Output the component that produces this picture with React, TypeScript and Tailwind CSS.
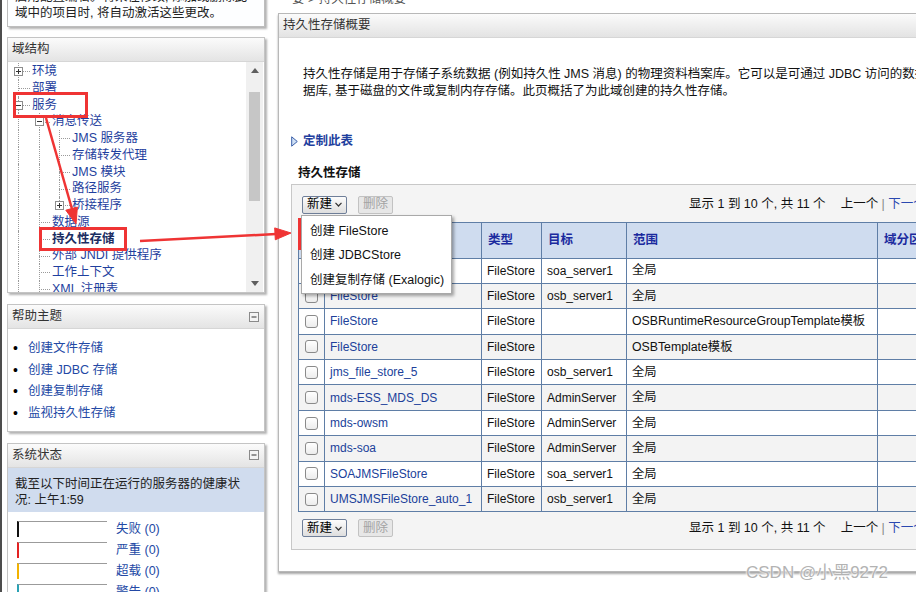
import React from "react";

type Node = { t: string; l: 0 | 1 | 2; exp?: "open" | "closed"; bold?: boolean; last?: boolean };

const TREE: Node[] = [
  { t: "环境", l: 0, exp: "closed" },
  { t: "部署", l: 0 },
  { t: "服务", l: 0, exp: "open" },
  { t: "消息传送", l: 1, exp: "open" },
  { t: "JMS 服务器", l: 2 },
  { t: "存储转发代理", l: 2 },
  { t: "JMS 模块", l: 2 },
  { t: "路径服务", l: 2 },
  { t: "桥接程序", l: 2, exp: "closed", last: true },
  { t: "数据源", l: 1 },
  { t: "持久性存储", l: 1, bold: true },
  { t: "外部 JNDI 提供程序", l: 1 },
  { t: "工作上下文", l: 1 },
  { t: "XML 注册表", l: 1 },
  { t: "XML 实体高速缓存", l: 1 },
];

const PL = ["pl-[24px]", "pl-[44px]", "pl-[64px]"];
const HLINE = ["left-[10px] w-[12px]", "left-[31px] w-[11px]", "left-[51px] w-[11px]"];
const EXP = ["left-[6px]", "left-[27px]", "left-[47px]"];

const ROWS = [
  ["FileStore", "FileStore", "soa_server1", "全局"],
  ["FileStore", "FileStore", "osb_server1", "全局"],
  ["FileStore", "FileStore", "", "OSBRuntimeResourceGroupTemplate模板"],
  ["FileStore", "FileStore", "", "OSBTemplate模板"],
  ["jms_file_store_5", "FileStore", "osb_server1", "全局"],
  ["mds-ESS_MDS_DS", "FileStore", "AdminServer", "全局"],
  ["mds-owsm", "FileStore", "AdminServer", "全局"],
  ["mds-soa", "FileStore", "AdminServer", "全局"],
  ["SOAJMSFileStore", "FileStore", "soa_server1", "全局"],
  ["UMSJMSFileStore_auto_1", "FileStore", "osb_server1", "全局"],
];

const STATUS = [
  { label: "失败", bar: "border-l-[#111]" },
  { label: "严重", bar: "border-l-[#e32222]" },
  { label: "超载", bar: "border-l-[#f2b200]" },
  { label: "警告", bar: "border-l-[#2aa2b4]" },
];

function Expander({ open }: { open: boolean }) {
  return (
    <svg width="9" height="9" viewBox="0 0 9 9" className="block">
      <rect x="0.5" y="0.5" width="8" height="8" fill="#fff" stroke="#8d8d8d" />
      <path d="M2 4.5h5" stroke="#333" />
      {!open && <path d="M4.5 2v5" stroke="#333" />}
    </svg>
  );
}

function Minus() {
  return (
    <svg width="10" height="10" viewBox="0 0 10 10" className="block">
      <rect x="0.5" y="0.5" width="9" height="9" fill="#f4f4f4" stroke="#8a8a8a" />
      <path d="M2.5 5h5" stroke="#333" />
    </svg>
  );
}

function TreeRow({ n }: { n: Node }) {
  return (
    <div className={`relative h-[16.75px] leading-[16.75px] whitespace-nowrap ${PL[n.l]}`}>
      <span className="absolute left-[10px] top-0 bottom-0 border-l border-dotted border-[#9a9a9a]" />
      {n.l >= 1 && <span className="absolute left-[31px] top-0 bottom-0 border-l border-dotted border-[#9a9a9a]" />}
      {n.l === 2 && (
        <span className={`absolute left-[51px] top-0 border-l border-dotted border-[#9a9a9a] ${n.last ? "h-1/2" : "bottom-0"}`} />
      )}
      <span className={`absolute top-1/2 border-t border-dotted border-[#9a9a9a] ${HLINE[n.l]}`} />
      {n.exp && (
        <span className={`absolute top-[4px] ${EXP[n.l]}`}>
          <Expander open={n.exp === "open"} />
        </span>
      )}
      <span className={n.bold ? "font-bold text-[#1b2d62]" : "text-[#1f3f9e]"}>{n.t}</span>
    </div>
  );
}

function PanelHead({ title, minus }: { title: string; minus?: boolean }) {
  return (
    <div className="h-[24px] flex items-center justify-between pl-[4px] pr-[5px] bg-linear-to-b from-[#fbfbfb] to-[#e4e4e4] border-b border-[#d6d6d6] text-[#333]">
      <span>{title}</span>
      {minus && <Minus />}
    </div>
  );
}

function Btn({ label, disabled, menu }: { label: string; disabled?: boolean; menu?: boolean }) {
  if (disabled)
    return (
      <div className="h-[18px] w-[35px] flex items-center justify-center rounded-[2px] border border-[#c2c2c2] bg-[#e7e7e7] text-[#a3a3a3]">
        {label}
      </div>
    );
  return (
    <div className="h-[18px] w-[45px] flex items-center justify-center gap-[3px] rounded-[2px] border border-[#6f7f99] bg-linear-to-b from-[#fcfcfc] to-[#dedede] text-black">
      <span>{label}</span>
      {menu && (
        <svg width="7" height="5" viewBox="0 0 7 5">
          <path d="M0.5 0.8L3.5 4L6.5 0.8" fill="none" stroke="#333" strokeWidth="1.2" />
        </svg>
      )}
    </div>
  );
}

function Pager() {
  return (
    <div className="whitespace-nowrap text-[#111]">
      显示 1 到 10 个, 共 11 个<span className="inline-block w-[15px]" />上一个 <span className="text-[#888]">|</span>{" "}
      <span className="text-[#2a48b0]">下一个</span>
    </div>
  );
}

export default function App() {
  return (
    <div className="relative w-[916px] h-[592px] overflow-hidden bg-white flex text-[12.5px] font-['Liberation_Sans','Noto_Sans_CJK_SC',sans-serif]">
      <div className="w-[2px] shrink-0 bg-[#4d4d4d]" />

      {/* left column */}
      <div className="w-[268px] shrink-0 flex flex-col">
        <div className="ml-[5px] w-[258px] -mt-[14px] border border-[#bdbdbd] bg-[#fdfeff] pt-[2px] pb-[5px] pl-[7px] leading-[16px] text-[#222] shadow-[2px_2px_2px_rgba(0,0,0,0.3)] whitespace-nowrap">
          启用配置编辑。将来在修改, 添加或删除此
          <br />
          域中的项目时, 将自动激活这些更改。
        </div>

        <div className="ml-[5px] mt-[10px] w-[258px] border border-[#c4c4c4] bg-white shadow-[2px_2px_2px_rgba(0,0,0,0.3)]">
          <PanelHead title="域结构" />
          <div className="h-[230px] flex pr-[1px]">
            <div className="flex-1 overflow-hidden pt-[1px]">
              {TREE.map((n) => (
                <TreeRow key={n.t} n={n} />
              ))}
            </div>
            <div className="w-[17px] bg-[#f0f0f0] flex flex-col items-center">
              <div className="h-[17px] flex items-center justify-center">
                <svg width="8" height="5" viewBox="0 0 8 5">
                  <path d="M0 5L4 0L8 5Z" fill="#5f5f5f" />
                </svg>
              </div>
              <div className="mt-[13px] w-[11px] h-[109px] bg-[#c6c6c6]" />
              <div className="mt-auto h-[17px] flex items-center justify-center">
                <svg width="8" height="5" viewBox="0 0 8 5">
                  <path d="M0 0L4 5L8 0Z" fill="#5f5f5f" />
                </svg>
              </div>
            </div>
          </div>
        </div>

        <div className="ml-[5px] mt-[11px] w-[258px] border border-[#c4c4c4] bg-white shadow-[2px_2px_2px_rgba(0,0,0,0.3)]">
          <PanelHead title="帮助主题" minus />
          <ul className="pt-[9px] pb-[6px] leading-[21.7px]">
            {["创建文件存储", "创建 JDBC 存储", "创建复制存储", "监视持久性存储"].map((t) => (
              <li key={t} className="flex items-center">
                <span className="w-[20px] pl-[5px] text-black text-[14px]">•</span>
                <span className="text-[#2349a5]">{t}</span>
              </li>
            ))}
          </ul>
        </div>

        <div className="ml-[5px] mt-[11px] w-[258px] border border-[#c4c4c4] bg-white shadow-[2px_2px_2px_rgba(0,0,0,0.3)]">
          <PanelHead title="系统状态" minus />
          <div className="bg-[#d0dcee] pl-[7px] pt-[8px] pb-[4px] leading-[16px] text-[#222] whitespace-nowrap">
            截至以下时间正在运行的服务器的健康状
            <br />
            况: 上午1:59
          </div>
          <div className="pl-[9px] pt-[9px] flex flex-col gap-[5px]">
            {STATUS.map((s) => (
              <div key={s.label} className="flex items-start gap-[9px]">
                <div className={`w-[90px] h-[16px] border-t border-t-[#9b9b9b] border-l-2 ${s.bar}`} />
                <span className="leading-[16px] text-[#2349a5]">
                  {s.label} (0)
                </span>
              </div>
            ))}
          </div>
        </div>
      </div>

      {/* right column */}
      <div className="flex-1 flex flex-col min-w-0">
        <div className="h-[13px] overflow-hidden pl-[22px]">
          <div className="-mt-[9px] leading-[16px] text-[#555] whitespace-nowrap">要 &gt; 持久性存储概要</div>
        </div>

        <div className="ml-[8px] w-[700px] shrink-0 border-t border-l border-b border-[#b8b8b8] bg-white shadow-[0_2px_2px_rgba(0,0,0,0.35)]">
          <div className="h-[24px] flex items-center pl-[4px] bg-linear-to-b from-[#fbfbfb] to-[#e3e3e3] border-b border-[#d6d6d6] text-[#333]">
            持久性存储概要
          </div>

          <p className="pt-[28px] pl-[24px] leading-[17px] text-[#111] whitespace-nowrap">
            持久性存储是用于存储子系统数据 (例如持久性 JMS 消息) 的物理资料档案库。它可以是可通过 JDBC 访问的数据
            <br />
            据库, 基于磁盘的文件或复制内存存储。此页概括了为此域创建的持久性存储。
          </p>

          <div className="mt-[33px] pl-[12px] h-[17px] flex items-center gap-[5px]">
            <svg width="7" height="11" viewBox="0 0 7 11">
              <path d="M0.7 0.8L6.3 5.5L0.7 10.2Z" fill="#cfe0f5" stroke="#3b5fa8" strokeWidth="1" />
            </svg>
            <span className="font-bold text-[#1f3f9e]">定制此表</span>
          </div>

          <div className="mt-[15px] pl-[19px] h-[17px] leading-[17px] font-bold text-[#111]">持久性存储</div>

          <div className="mt-[1.5px] ml-[12px] mb-[21px] w-[690px] border border-[#c8c8c8] bg-[#f4f4f4] pt-[11px] pb-[12px]">
            <div className="flex items-center pl-[10px] h-[18px]">
              <div className="w-[387px] flex items-center gap-[11px]">
                <div className="relative">
                  <Btn label="新建" menu />
                  <div className="absolute left-[-1px] top-[19px] w-[151px] h-[79px] z-10 border border-[#a9a9a9] bg-white shadow-[2px_2px_3px_rgba(0,0,0,0.35)] pt-[3px] text-[#111] whitespace-nowrap">
                    <div className="h-[24.5px] leading-[24.5px] pl-[8px]">创建 FileStore</div>
                    <div className="h-[24.5px] leading-[24.5px] pl-[8px]">创建 JDBCStore</div>
                    <div className="h-[24.5px] leading-[24.5px] pl-[8px]">创建复制存储 (Exalogic)</div>
                  </div>
                </div>
                <Btn label="删除" disabled />
              </div>
              <Pager />
            </div>

            <table className="mt-[8px] ml-[6px] w-[679px] table-fixed border-collapse text-[12px]">
              <colgroup>
                <col className="w-[26px]" />
                <col className="w-[157px]" />
                <col className="w-[60px]" />
                <col className="w-[85px]" />
                <col className="w-[251px]" />
                <col className="w-[100px]" />
              </colgroup>
              <thead>
                <tr className="h-[36px] bg-[#cfdcef] text-left text-[12.5px] font-bold text-[#1b2a9e]">
                  <th className="border border-[#5f7ea6]" />
                  <th className="border border-[#5f7ea6] pl-[5px] font-bold">名称</th>
                  <th className="border border-[#5f7ea6] pl-[6px] font-bold">类型</th>
                  <th className="border border-[#5f7ea6] pl-[6px] font-bold">目标</th>
                  <th className="border border-[#5f7ea6] pl-[6px] font-bold">范围</th>
                  <th className="border border-[#5f7ea6] pl-[6px] font-bold whitespace-nowrap">域分区</th>
                </tr>
              </thead>
              <tbody>
                {ROWS.map((r, i) => (
                  <tr key={i} className={`h-[25.4px] ${i % 2 === 0 ? "bg-white" : "bg-[#f3f3f3]"}`}>
                    <td className="border border-[#5f7ea6]">
                      <div className="mx-auto w-[13px] h-[13px] rounded-[3px] border border-[#8a8a8a] bg-linear-to-b from-white to-[#ececec]" />
                    </td>
                    <td className="border border-[#5f7ea6] pl-[5px] text-[#203f9a] whitespace-nowrap">{r[0]}</td>
                    <td className="border border-[#5f7ea6] pl-[5px] text-[#111] whitespace-nowrap">{r[1]}</td>
                    <td className="border border-[#5f7ea6] pl-[5px] text-[#111] whitespace-nowrap overflow-hidden">{r[2]}</td>
                    <td className="border border-[#5f7ea6] pl-[5px] text-[#111] whitespace-nowrap text-[12.3px]">{r[3]}</td>
                    <td className="border border-[#5f7ea6]" />
                  </tr>
                ))}
              </tbody>
            </table>

            <div className="mt-[7px] flex items-center pl-[10px] h-[18px]">
              <div className="w-[387px] flex items-center gap-[11px]">
                <Btn label="新建" menu />
                <Btn label="删除" disabled />
              </div>
              <Pager />
            </div>
          </div>
        </div>
      </div>

      {/* annotations */}
      <svg className="absolute inset-0 pointer-events-none" width="916" height="592" viewBox="0 0 916 592">
        <g fill="none" stroke="#ef3434" strokeWidth="3">
          <rect x="14.5" y="93.5" width="72" height="23" />
          <rect x="40.5" y="228.5" width="85" height="21" />
          <rect x="299.5" y="219.5" width="132" height="29" />
        </g>
        <g stroke="#ef3434" strokeWidth="2.5" fill="#ef3434">
          <line x1="46" y1="118" x2="72" y2="209" />
          <polygon points="76,224 77.4,207 65.8,210.2" strokeWidth="1" />
          <line x1="140" y1="241" x2="276" y2="234" />
          <polygon points="291,233 275.3,239.8 274.7,227.9" strokeWidth="1" />
        </g>
      </svg>

      <div className="absolute left-[746px] top-[562px] text-[17px] leading-[22px] text-[#b3b3b3] whitespace-nowrap [text-shadow:0_0_2px_#fff,0_0_2px_#fff]">
        CSDN @小黑9272
      </div>
    </div>
  );
}
